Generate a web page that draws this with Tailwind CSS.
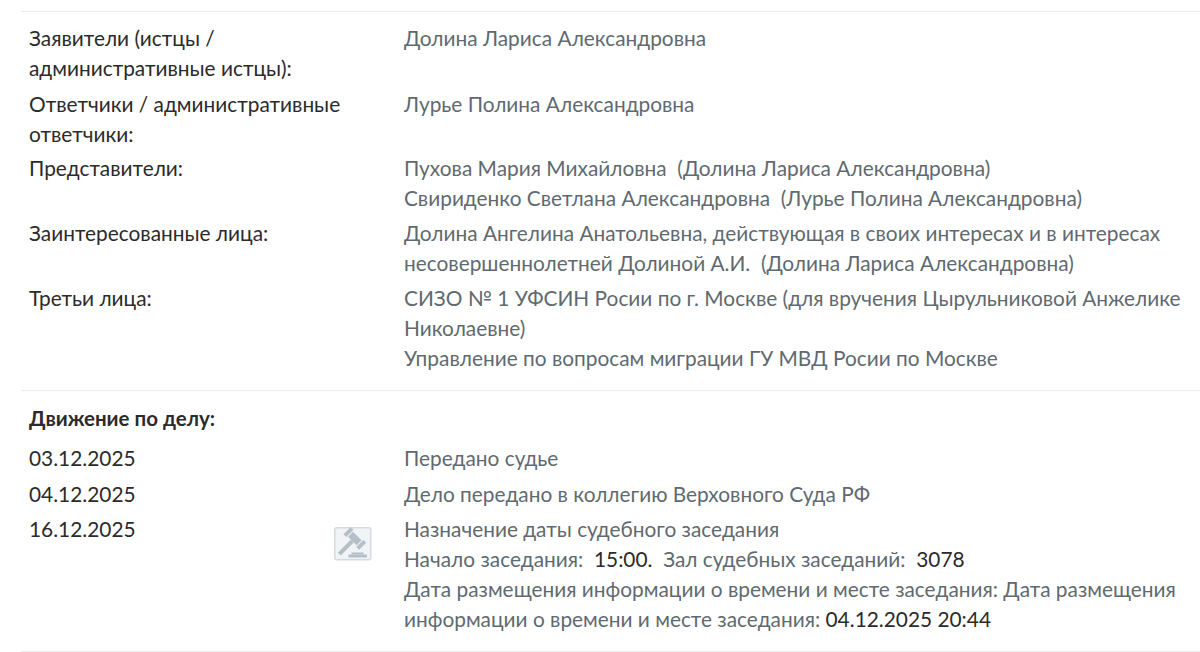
<!DOCTYPE html>
<html lang="en">
  <head>
    <meta charset="UTF-8" />
    <title>Карточка дела</title>
    <script src="https://cdn.jsdelivr.net/npm/@tailwindcss/browser@4"></script>
  </head>
  <body class="bg-white h-[652px] overflow-hidden font-['Lato','Noto_Sans',sans-serif] text-[20.85px] leading-[30px] text-[#2b2b2b]">
    <div class="ml-[21px] pt-[11px]">
      <section class="border-t border-[#ececec] pt-[11px] pb-[17px] pl-[8px] flex flex-col gap-[5px] text-[#5f6a70]">
        <div class="grid grid-cols-[375px_1fr]">
          <div class="text-[#2b2b2b] w-[330px]">Заявители (истцы / административные истцы):</div>
          <div>Долина Лариса Александровна</div>
        </div>
        <div class="grid grid-cols-[375px_1fr] mt-[1px] mb-[-1px]">
          <div class="text-[#2b2b2b] w-[330px]">Ответчики / административные ответчики:</div>
          <div>Лурье Полина Александровна</div>
        </div>
        <div class="grid grid-cols-[375px_1fr]">
          <div class="text-[#2b2b2b]">Представители:</div>
          <div>
            <div>Пухова Мария Михайловна&nbsp; (Долина Лариса Александровна)</div>
            <div>Свириденко Светлана Александровна&nbsp; (Лурье Полина Александровна)</div>
          </div>
        </div>
        <div class="grid grid-cols-[375px_1fr]">
          <div class="text-[#2b2b2b]">Заинтересованные лица:</div>
          <div>Долина Ангелина Анатольевна, действующая в своих интересах и в интересах несовершеннолетней Долиной А.И.&nbsp; (Долина Лариса Александровна)</div>
        </div>
        <div class="grid grid-cols-[375px_1fr]">
          <div class="text-[#2b2b2b]">Третьи лица:</div>
          <div>
            <div>СИЗО № 1 УФСИН Росии по г. Москве (для вручения Цырульниковой Анжелике Николаевне)</div>
            <div>Управление по вопросам миграции ГУ МВД Росии по Москве</div>
          </div>
        </div>
      </section>

      <section class="border-t border-b border-[#ececec] pt-[12px] pl-[8px] h-[262px] text-[#5f6a70]">
        <h3 class="font-bold text-[20.5px] text-[#2b2b2b]">Движение по делу:</h3>
        <div class="mt-[10px] flex flex-col gap-[5.5px]">
          <div class="grid grid-cols-[375px_1fr]">
            <div class="text-[#2b2b2b]">03.12.2025</div>
            <div>Передано судье</div>
          </div>
          <div class="grid grid-cols-[375px_1fr]">
            <div class="text-[#2b2b2b]">04.12.2025</div>
            <div>Дело передано в коллегию Верховного Суда РФ</div>
          </div>
          <div class="grid grid-cols-[305px_70px_1fr]">
            <div class="text-[#2b2b2b]">16.12.2025</div>
            <div class="pt-[13px]">
              <svg class="w-[38px] h-[34px]" viewBox="0 0 38 34">
                <rect x="0.75" y="0.75" width="36" height="32" rx="2" fill="#f0f4f6" stroke="#d3dce1" stroke-width="1.5" />
                <g fill="#b4c0c7">
                  <g transform="translate(20.8 11.5) rotate(45)">
                    <rect x="-11" y="-5" width="4" height="10" />
                    <rect x="-6" y="-3.5" width="12" height="7" />
                    <rect x="7" y="-5" width="4" height="10" />
                    <rect x="-2" y="3.5" width="4" height="18.5" />
                  </g>
                  <rect x="17.5" y="25.5" width="12" height="2" />
                  <rect x="14.5" y="27.5" width="18.5" height="3" />
                </g>
              </svg>
            </div>
            <div>
              <div>Назначение даты судебного заседания</div>
              <div>Начало заседания:&nbsp; <span class="text-[#2b2b2b]">15:00.</span>&nbsp; Зал судебных заседаний:&nbsp; <span class="text-[#2b2b2b]">3078</span></div>
              <div>Дата размещения информации о времени и месте заседания: Дата размещения информации о времени и месте заседания: <span class="text-[#2b2b2b]">04.12.2025 20:44</span></div>
            </div>
          </div>
        </div>
      </section>
    </div>
  </body>
</html>
